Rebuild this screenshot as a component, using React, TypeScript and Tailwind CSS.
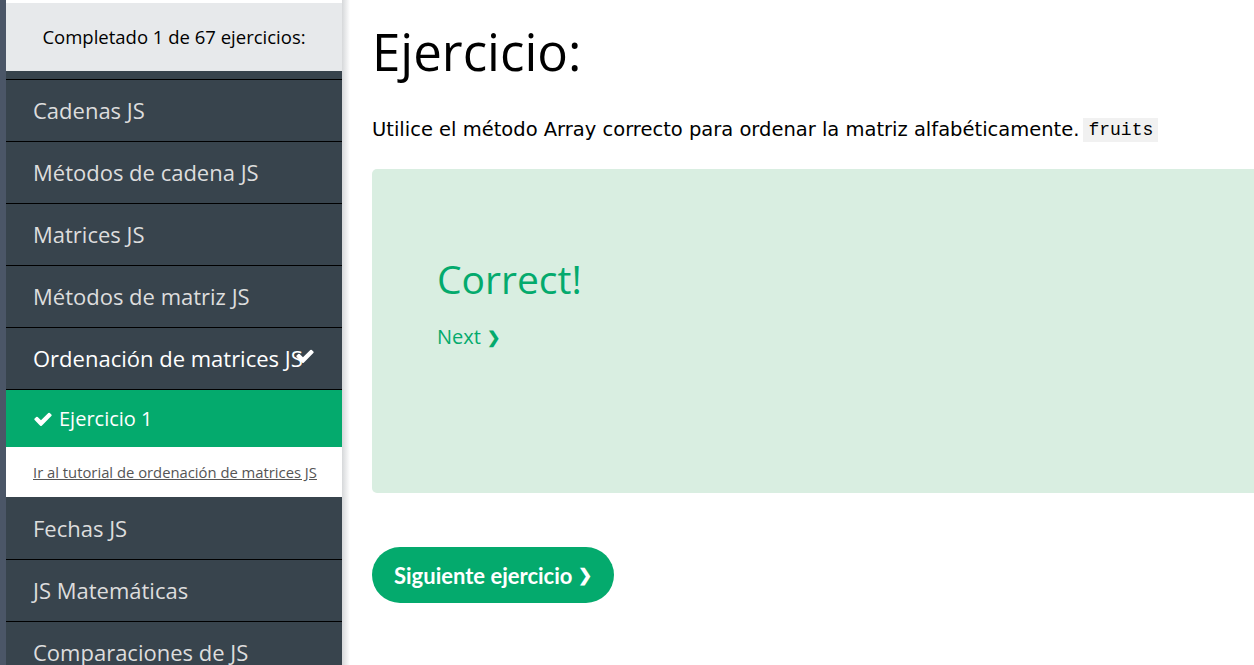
import React from 'react'

const sans = { fontFamily: '"Open Sans", "Noto Sans", sans-serif' }

function Check({ className }: { className?: string }) {
  return (
    <svg viewBox="0 0 1792 1792" className={className} fill="currentColor">
      <path d="M1671 566q0 40-28 68l-724 724-136 136q-28 28-68 28t-68-28l-136-136-362-362q-28-28-28-68t28-68l136-136q28-28 68-28t68 28l294 295 656-657q28-28 68-28t68 28l136 136q28 28 28 68z" />
    </svg>
  )
}

const topItems = ['Cadenas JS', 'Métodos de cadena JS', 'Matrices JS', 'Métodos de matriz JS']
const bottomItems = ['Fechas JS', 'JS Matemáticas', 'Comparaciones de JS']

export default function App() {
  return (
    <div className="flex h-[665px] overflow-hidden bg-white" style={sans}>
      <div className="w-[6px] shrink-0 bg-[#4b5667]" />

      {/* Sidebar */}
      <aside className="w-[336px] shrink-0 bg-[#38444d] flex flex-col">
        <div className="h-[3px] shrink-0 bg-white" />
        <div className="h-[68px] shrink-0 bg-[#e7e9eb] flex items-center justify-center text-[18.5px] text-black">
          Completado 1 de 67 ejercicios:
        </div>
        <div className="h-[8px] shrink-0" />

        {topItems.map((item) => (
          <div
            key={item}
            className="h-[62px] shrink-0 border-t border-black flex items-center px-[27px] text-[22px] text-[#dddddd]"
          >
            {item}
          </div>
        ))}

        <div className="h-[62px] shrink-0 border-t border-black flex items-center px-[27px] text-[22px] text-white">
          <span>Ordenación de matrices JS</span>
          <Check className="w-[20px] h-[20px] -ml-[8px] -mt-[6px] text-white" />
        </div>

        <div className="h-[58px] shrink-0 border-t border-black bg-[#04aa6d] flex items-center px-[27px] text-[20px] text-white">
          <Check className="w-[20px] h-[20px] mr-[6px]" />
          <span>Ejercicio 1</span>
        </div>

        <div className="h-[50px] shrink-0 bg-white flex items-center px-[27px]">
          <span className="text-[14.8px] text-[#555555] underline whitespace-nowrap">
            Ir al tutorial de ordenación de matrices JS
          </span>
        </div>

        {bottomItems.map((item, i) => (
          <div
            key={item}
            className={`h-[62px] shrink-0 flex items-center px-[27px] text-[22px] text-[#dddddd] ${i > 0 ? 'border-t border-black' : ''}`}
          >
            {item}
          </div>
        ))}
      </aside>

      <div className="w-[8px] shrink-0 bg-gradient-to-r from-[#d6d8da] to-white" />

      {/* Main */}
      <main className="pl-[22px] shrink-0 w-[1000px]">
        <h1 className="text-[51px] leading-none mt-[26px] text-black">Ejercicio:</h1>

        <p className="mt-[41px] h-[24px] leading-[24px] text-[19.5px] text-black flex items-center whitespace-nowrap font-['DejaVu_Sans',Verdana,sans-serif]">
          Utilice el método Array correcto para ordenar la matriz alfabéticamente.
          <code className="ml-[4px] h-[24px] leading-[24px] bg-[#f1f1f1] px-[5px] text-[18px] font-['Liberation_Mono',monospace]">
            fruits
          </code>
        </p>

        <div className="mt-[27px] h-[324px] bg-[#d9eee1] rounded-l-[5px] pl-[65px] pt-[90px]">
          <div className="text-[39px] leading-none text-[#04aa6d]">Correct!</div>
          <div className="mt-[24px] text-[20px] text-[#04aa6d] flex items-center gap-[6px]">
            Next <span className="text-[16px] font-bold">❯</span>
          </div>
        </div>

        <button
          className="mt-[54px] h-[56px] px-[22px] rounded-full bg-[#04aa6d] text-white text-[22px] font-bold flex items-center gap-[6px]"
          style={{ fontFamily: 'Lato, "Open Sans", sans-serif' }}
        >
          Siguiente ejercicio <span className="text-[17px]">❯</span>
        </button>
      </main>
    </div>
  )
}
